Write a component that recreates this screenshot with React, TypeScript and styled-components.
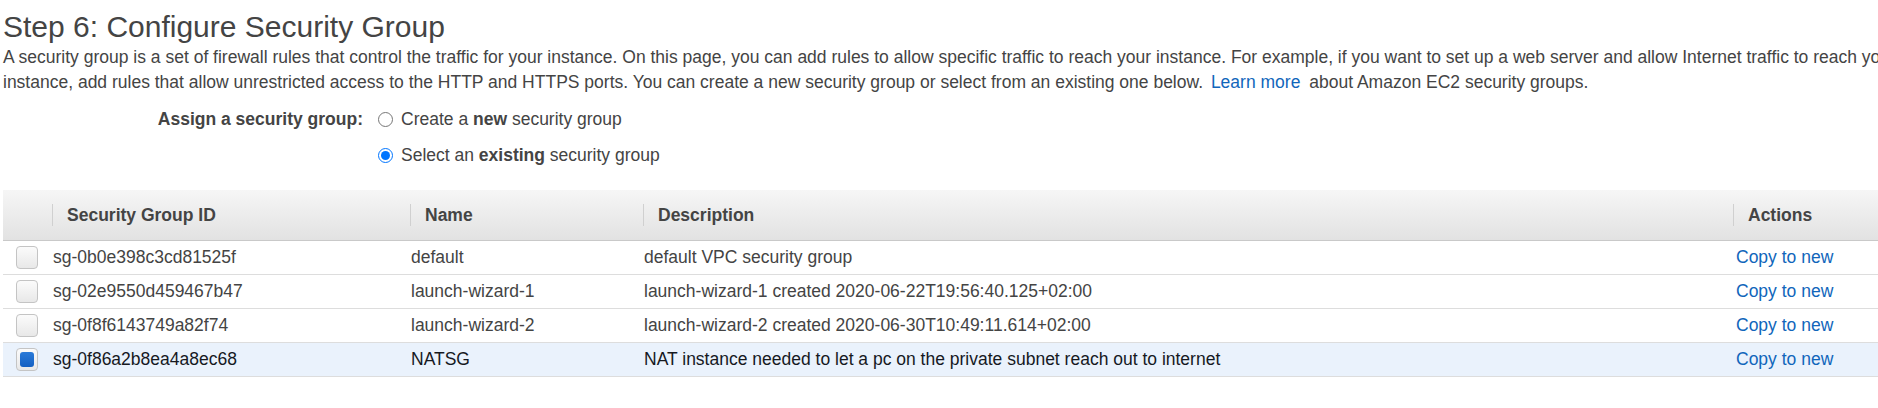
import React from "react";
import styled, { createGlobalStyle } from "styled-components";

const GlobalStyle = createGlobalStyle`
  html, body { margin: 0; padding: 0; background: #ffffff; overflow: hidden; }
  body { font-family: "Liberation Sans", Arial, Helvetica, sans-serif; color: #444444; }
  * { box-sizing: border-box; }
`;

const Page = styled.div`
  width: 1878px;
  padding: 9px 0 0 3px;
`;

const Title = styled.h2`
  margin: 0;
  font-size: 30px;
  line-height: 36px;
  font-weight: normal;
  color: #444444;
`;

const Intro = styled.p`
  margin: 0;
  font-size: 17.5px;
  line-height: 25px;
  white-space: nowrap;
  color: #444444;
`;

const Link = styled.a<{ $inline?: boolean }>`
  color: #1166bb;
  text-decoration: none;
  cursor: pointer;
  margin: ${(p) => (p.$inline ? "0 4px 0 3px" : "0")};
`;

const AssignGrid = styled.div`
  display: grid;
  grid-template-columns: 360px auto;
  column-gap: 15px;
  row-gap: 11px;
  margin-top: 12px;
  font-size: 17.5px;
  line-height: 25px;
`;

const AssignLabel = styled.div`
  grid-column: 1;
  grid-row: 1;
  text-align: right;
  font-weight: bold;
  color: #444444;
`;

const Option = styled.label<{ $row: number }>`
  grid-column: 2;
  grid-row: ${(p) => p.$row};
  display: flex;
  align-items: center;
  gap: 8px;
  height: 25px;
  cursor: pointer;
`;

const Radio = styled.input`
  width: 15px;
  height: 15px;
  margin: 0;
`;

const Table = styled.div`
  margin-top: 22px;
  width: 1875px;
  font-size: 17.5px;
`;

const columns = "49px 358px 233px 1090px 1fr";

const HeaderRow = styled.div`
  display: grid;
  grid-template-columns: ${columns};
  height: 51px;
  background: linear-gradient(#f6f6f6, #e2e2e2);
  border-bottom: 1px solid #c9c9c9;
`;

const HeaderCell = styled.div`
  display: flex;
  align-items: center;
`;

const HeaderLabel = styled.div`
  border-left: 1px solid #d0d0d0;
  padding-left: 14px;
  line-height: 22px;
  font-weight: bold;
  color: #444444;
`;

const Row = styled.div<{ $selected?: boolean }>`
  display: grid;
  grid-template-columns: ${columns};
  height: 34px;
  align-items: center;
  border-bottom: 1px solid #dddddd;
  background: ${(p) => (p.$selected ? "#eaf2fc" : "#ffffff")};
  color: ${(p) => (p.$selected ? "#16191f" : "#444444")};
`;

const Cell = styled.div<{ $pad?: number }>`
  padding-left: ${(p) => p.$pad ?? 1}px;
  white-space: nowrap;
  line-height: 25px;
`;

const CheckCell = styled.div`
  padding-left: 13px;
  display: flex;
  align-items: center;
`;

const Check = styled.span<{ $checked?: boolean }>`
  position: relative;
  display: block;
  width: 22px;
  height: 23px;
  border: 1px solid #c4c4c4;
  border-radius: 4px;
  background: linear-gradient(#fbfbfb, #e8e8e8);
  &::after {
    content: "";
    display: ${(p) => (p.$checked ? "block" : "none")};
    position: absolute;
    inset: 3px;
    border-radius: 3px;
    background: linear-gradient(#2a7ad8, #1560c2);
  }
`;

type Group = { id: string; name: string; desc: string; selected?: boolean };

const groups: Group[] = [
  { id: "sg-0b0e398c3cd81525f", name: "default", desc: "default VPC security group" },
  {
    id: "sg-02e9550d459467b47",
    name: "launch-wizard-1",
    desc: "launch-wizard-1 created 2020-06-22T19:56:40.125+02:00",
  },
  {
    id: "sg-0f8f6143749a82f74",
    name: "launch-wizard-2",
    desc: "launch-wizard-2 created 2020-06-30T10:49:11.614+02:00",
  },
  {
    id: "sg-0f86a2b8ea4a8ec68",
    name: "NATSG",
    desc: "NAT instance needed to let a pc on the private subnet reach out to internet",
    selected: true,
  },
];

export default function App() {
  return (
    <>
      <GlobalStyle />
      <Page>
        <Title>Step 6: Configure Security Group</Title>
        <Intro>
          A security group is a set of firewall rules that control the traffic for your instance. On this page, you can
          add rules to allow specific traffic to reach your instance. For example, if you want to set up a web server and
          allow Internet traffic to reach your
          <br />
          instance, add rules that allow unrestricted access to the HTTP and HTTPS ports. You can create a new security
          group or select from an existing one below. <Link $inline>Learn more</Link> about Amazon EC2 security groups.
        </Intro>
        <AssignGrid>
          <AssignLabel>Assign a security group:</AssignLabel>
          <Option $row={1}>
            <Radio type="radio" name="sg" />
            <span>
              Create a <b>new</b> security group
            </span>
          </Option>
          <Option $row={2}>
            <Radio type="radio" name="sg" defaultChecked />
            <span>
              Select an <b>existing</b> security group
            </span>
          </Option>
        </AssignGrid>
        <Table>
          <HeaderRow>
            <HeaderCell />
            <HeaderCell>
              <HeaderLabel>Security Group ID</HeaderLabel>
            </HeaderCell>
            <HeaderCell>
              <HeaderLabel>Name</HeaderLabel>
            </HeaderCell>
            <HeaderCell>
              <HeaderLabel>Description</HeaderLabel>
            </HeaderCell>
            <HeaderCell>
              <HeaderLabel>Actions</HeaderLabel>
            </HeaderCell>
          </HeaderRow>
          {groups.map((g) => (
            <Row key={g.id} $selected={g.selected}>
              <CheckCell>
                <Check $checked={g.selected} />
              </CheckCell>
              <Cell>{g.id}</Cell>
              <Cell>{g.name}</Cell>
              <Cell>{g.desc}</Cell>
              <Cell $pad={3}>
                <Link>Copy to new</Link>
              </Cell>
            </Row>
          ))}
        </Table>
      </Page>
    </>
  );
}
